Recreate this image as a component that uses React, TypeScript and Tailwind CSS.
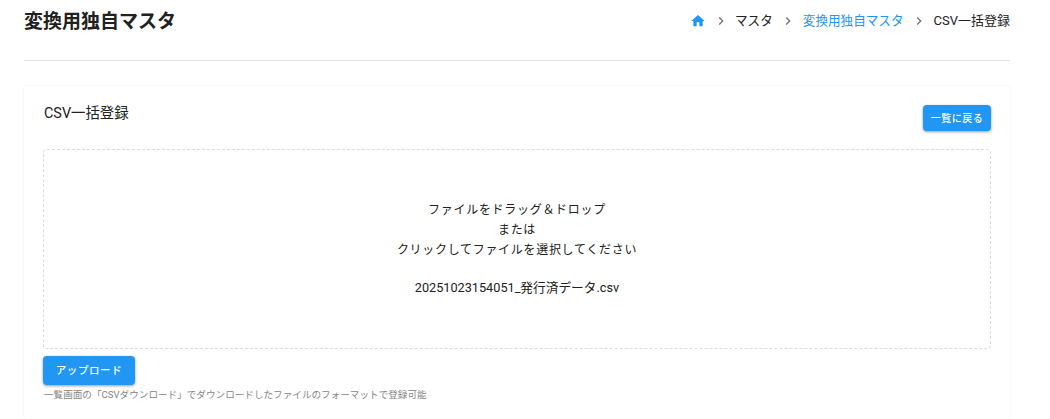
import React from "react";

const Chevron = () => (
  <svg width="16" height="16" viewBox="0 0 24 24" fill="#757575" className="shrink-0">
    <path d="M10 6 8.59 7.41 13.17 12l-4.58 4.59L10 18l6-6z" />
  </svg>
);

export default function App() {
  return (
    <div
      className="w-[1050px] h-[419px] overflow-hidden bg-white text-[#212121]"
      style={{ fontFamily: 'Roboto, "Noto Sans CJK JP", sans-serif' }}
    >
      <div className="ml-6 mr-10">
        <header className="h-[61px] border-b border-[#e0e0e0] flex justify-between items-start">
          <h1 className="mt-[7px] text-[19px] leading-[30px] font-bold">変換用独自マスタ</h1>
          <nav className="mt-[9px] h-6 flex items-center text-[12.6px] leading-6">
            <svg width="16" height="16" viewBox="0 0 24 24" fill="#2196f3" className="shrink-0">
              <path d="M10 20v-6h4v6h5v-8h3L12 3 2 12h3v8z" />
            </svg>
            <span className="w-[29px] flex justify-center"><Chevron /></span>
            <span>マスタ</span>
            <span className="w-[30px] flex justify-center"><Chevron /></span>
            <span className="text-[#2196f3]">変換用独自マスタ</span>
            <span className="w-[30px] flex justify-center"><Chevron /></span>
            <span className="text-[13px]">CSV一括登録</span>
          </nav>
        </header>
        <main className="mt-[25px] rounded-[4px] shadow-[0_0_3px_rgba(0,0,0,0.08)] px-[19px] pt-[19px] pb-4">
          <div className="h-[44px] flex justify-between items-start">
            <h2 className="ml-px mt-px text-[14.4px] leading-4 font-normal">CSV一括登録</h2>
            <button className="w-[68px] h-[26px] rounded-[4px] bg-[#2196f3] text-white text-[10px] font-medium tracking-[0.5px] shadow-[0_1px_3px_rgba(0,0,0,0.4)]">
              一覧に戻る
            </button>
          </div>
          <div className="h-[200px] rounded-[4px] border border-dashed border-[#dcdcdc] flex flex-col items-center justify-center text-[12px] leading-[20px] tracking-[0.7px] text-center">
            <p>ファイルをドラッグ＆ドロップ</p>
            <p>または</p>
            <p>クリックしてファイルを選択してください</p>
            <p className="mt-[18px] text-[12.7px] tracking-normal">20251023154051_発行済データ.csv</p>
          </div>
          <button className="mt-[7px] block w-[92px] h-[29px] rounded-[4px] bg-[#2196f3] text-white text-[10.5px] font-medium tracking-[0.6px] shadow-[0_1px_3px_rgba(0,0,0,0.4)]">
            アップロード
          </button>
          <p className="ml-px mt-[2px] text-[9.6px] leading-4 text-[#858585]">
            一覧画面の「CSVダウンロード」でダウンロードしたファイルのフォーマットで登録可能
          </p>
        </main>
      </div>
    </div>
  );
}
